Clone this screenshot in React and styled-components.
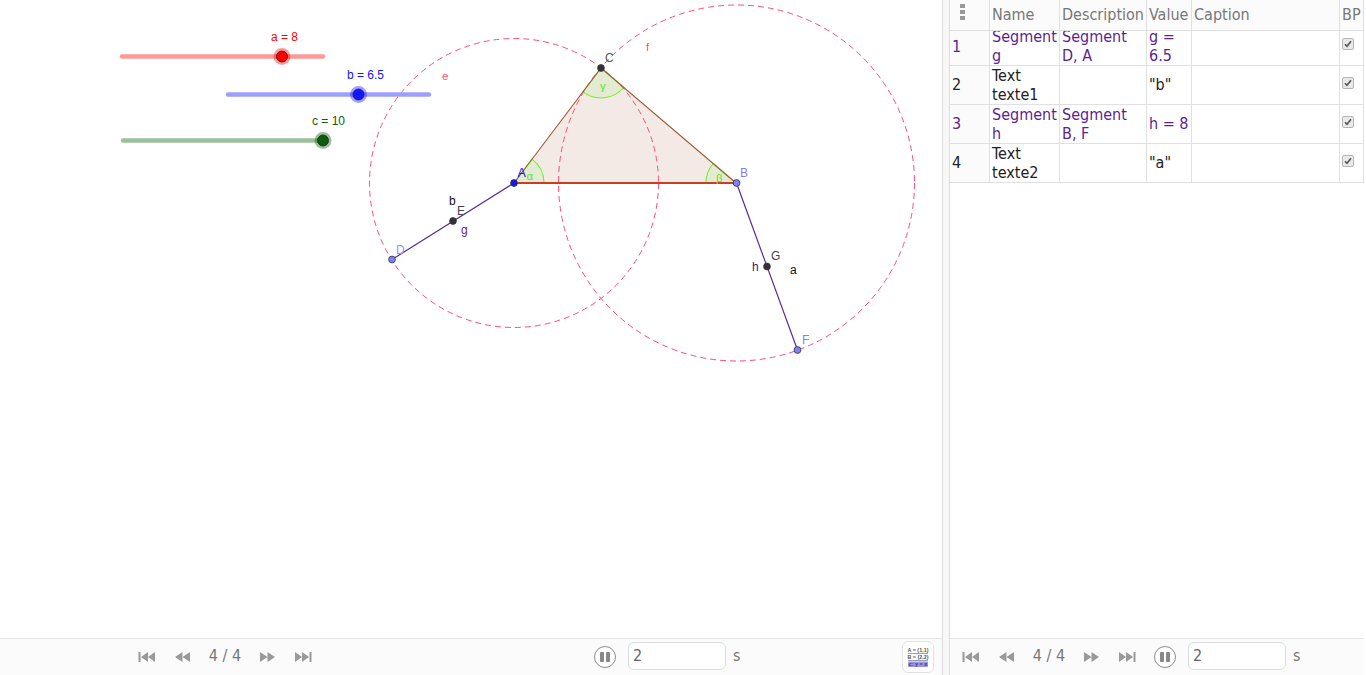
import React from "react";
import styled, { createGlobalStyle } from "styled-components";

const GlobalStyle = createGlobalStyle`
  html, body {
    margin: 0;
    padding: 0;
    background: #fff;
  }
  body {
    font-family: "DejaVu Sans Condensed", "DejaVu Sans", sans-serif;
  }
`;

const dots = `
  background-color: #fbfbfb;
  background-image: radial-gradient(#ececec 0.6px, transparent 0.7px);
  background-size: 8px 8px;
`;

const Page = styled.div`
  width: 1366px;
  height: 675px;
  display: flex;
  overflow: hidden;
`;

const GraphicsPanel = styled.div`
  width: 942px;
  display: flex;
  flex-direction: column;
`;

const Canvas = styled.svg`
  display: block;
  width: 942px;
  height: 638px;
  flex: none;
`;

const Divider = styled.div`
  width: 6px;
  border-left: 1px solid #dedede;
  border-right: 1px solid #dedede;
  background: #f7f7f7;
`;

const TablePanel = styled.div`
  width: 414px;
  display: flex;
  flex-direction: column;
`;

const Table = styled.div`
  height: 638px;
  flex: none;
  overflow: hidden;
`;

const Row = styled.div`
  display: grid;
  grid-template-columns: 40px 70px 87px 45px 148px 24px;
  grid-template-rows: minmax(0, 1fr);
  width: 414px;
  height: ${(p) => p.$height}px;
  border-bottom: 1px solid #e0e0e0;
  box-sizing: content-box;
  ${(p) => p.$head && dots}
`;

const Cell = styled.div`
  display: flex;
  align-items: center;
  min-width: 0;
  padding: 0 1px ${(p) => (p.$tight ? 4 : 1)}px 2px;
  border-right: 1px solid #e0e0e0;
  font-size: 16px;
  line-height: 19px;
  color: ${(p) => (p.$head ? "#777" : p.$purple ? "#5b1f96" : "#222")};
  ${(p) => p.$dotted && dots}
  box-sizing: border-box;
`;

const HeadRow = styled(Row)`
  position: relative;
  z-index: 1;
`;

const MenuDots = styled.div`
  display: flex;
  flex-direction: column;
  gap: 2px;
  margin: -5px 0 0 8px;
`;

const MenuDot = styled.span`
  width: 5px;
  height: 4px;
  background: #999;
`;

const CheckBox = styled.span`
  display: flex;
  align-items: center;
  justify-content: center;
  width: 12px;
  height: 12px;
  margin: -4px 0 0 0;
  border: 1px solid #b5b5b5;
  border-radius: 2px;
  background: #e9e9e9;
  box-sizing: border-box;
`;

const Toolbar = styled.div`
  flex: 1;
  display: flex;
  align-items: center;
  border-top: 1px solid #e6e6e6;
  padding-left: ${(p) => p.$left}px;
  ${dots}
`;

const Transport = styled.div`
  display: flex;
  align-items: center;
  width: ${(p) => p.$width}px;
  flex: none;
  justify-content: space-between;
`;

const Counter = styled.span`
  font-size: 16px;
  color: #777;
  margin-top: -3px;
`;

const PauseButton = styled.span`
  flex: none;
  width: 22px;
  height: 22px;
  margin-left: ${(p) => p.$gap}px;
  border: 1.5px solid #8c8c8c;
  border-radius: 50%;
  background: #fff;
  display: flex;
  align-items: center;
  justify-content: center;
  gap: 2px;
  box-sizing: border-box;
`;

const PauseBar = styled.span`
  width: 4px;
  height: 10px;
  background: #888;
  border-radius: 1px;
`;

const SpeedInput = styled.div`
  flex: none;
  width: 98px;
  height: 28px;
  margin-left: ${(p) => p.$gap}px;
  margin-top: -2px;
  padding-left: 4px;
  border: 1px solid #dcdcdc;
  border-radius: 6px;
  background: #fff;
  box-sizing: border-box;
  font-size: 16px;
  line-height: 25px;
  color: #666;
`;

const Unit = styled.span`
  margin-left: 7px;
  margin-top: -3px;
  font-size: 16px;
  color: #777;
`;

const AlgebraButton = styled.span`
  flex: none;
  width: 32px;
  height: 32px;
  margin-left: auto;
  margin-right: 8px;
  border: 1px solid #e2e2e2;
  border-radius: 6px;
  background: #fff;
  box-sizing: border-box;
  display: flex;
  align-items: center;
  justify-content: center;
`;

const StepIcon = ({ dir, end }) => (
  <svg width="18" height="12" viewBox="0 0 18 12" style={dir === "back" ? undefined : { transform: "scaleX(-1)" }}>
    {end ? (
      <>
        <rect x="0.5" y="1" width="2" height="10" fill="#999" />
        <path d="M3 6 L10 1 V11 Z M10 6 L17 1 V11 Z" fill="#999" />
      </>
    ) : (
      <path d="M2 6 L9.5 1 V11 Z M9.5 6 L17 1 V11 Z" fill="#999" />
    )}
  </svg>
);

const AlgebraIcon = () => (
  <svg width="22" height="22" viewBox="0 0 22 22" fontFamily="Liberation Sans, sans-serif" fontWeight="700" fontSize="5.4">
    <text x="11" y="6" textAnchor="middle" fill="#555">A = (1,1)</text>
    <rect x="1" y="7" width="20" height="0.8" fill="#888" />
    <text x="11" y="13" textAnchor="middle" fill="#555">B = (2,2)</text>
    <rect x="1" y="14" width="20" height="0.8" fill="#888" />
    <rect x="1" y="15.5" width="20" height="5.5" rx="1" fill="#9b92f0" />
    <text x="11" y="20" textAnchor="middle" fill="#444">c: y = x</text>
  </svg>
);

const Controls = ({ width }) => (
  <Transport $width={width}>
    <StepIcon dir="back" end />
    <StepIcon dir="back" />
    <Counter>4 / 4</Counter>
    <StepIcon dir="forward" />
    <StepIcon dir="forward" end />
  </Transport>
);

const sliders = [
  { x1: 122, x2: 323, y: 56.5, knob: 282, color: "#ff0000", track: "#ff9999", label: "a = 8", lx: 284.5, ly: 41 },
  { x1: 228, x2: 429, y: 94.5, knob: 358.5, color: "#1414ff", track: "#9e9eff", label: "b = 6.5", lx: 365.5, ly: 79 },
  { x1: 123, x2: 323, y: 140.5, knob: 323, color: "#0c5c0c", track: "#9bc19b", label: "c = 10", lx: 328.5, ly: 125 },
];

const points = [
  { x: 392, y: 259.5, fill: "#7f7fff" },
  { x: 453, y: 221, fill: "#333" },
  { x: 767, y: 266.5, fill: "#333" },
  { x: 797.5, y: 350, fill: "#7f7fff" },
  { x: 601, y: 68, fill: "#333" },
  { x: 736.5, y: 183, fill: "#7f7fff" },
  { x: 514, y: 183, fill: "#1414ff" },
];

const labels = [
  ["A", 517.5, 177, "#1414ff", 12.5],
  ["α", 526.5, 180, "#66e033", 11.5],
  ["B", 740, 177, "#7f7fff", 12],
  ["β", 716, 182, "#66e033", 11.5],
  ["C", 605, 62, "#555", 12],
  ["γ", 600, 90, "#66e033", 11.5],
  ["D", 396, 254, "#8f8fff", 12],
  ["E", 457, 215, "#444", 12],
  ["F", 802, 344, "#7f7fff", 12],
  ["G", 771, 260, "#444", 12],
  ["b", 449, 205, "#111", 12],
  ["g", 461, 234, "#5b1f96", 12],
  ["h", 752, 271, "#3f1570", 12],
  ["a", 790, 274, "#111", 12],
  ["e", 442, 80, "#ff4d7d", 11.5],
  ["f", 646, 51, "#ff4d7d", 11.5],
];

const Drawing = () => (
  <Canvas viewBox="0 0 942 638" fontFamily="Liberation Sans, sans-serif">
    <path d="M514 183 L601 68 L736 183 Z" fill="#f4eae5" />
    <g fill="#e3ecd2" stroke="#77ee33" strokeWidth="1.1">
      <path d="M514 183 L532.1 159.1 A30 30 0 0 1 544 183 Z" />
      <path d="M736 183 L706 183 A30 30 0 0 1 713.2 163.5 Z" />
      <path d="M601 68 L623.8 87.5 A30 30 0 0 1 582.9 91.9 Z" />
    </g>
    <g fill="none" stroke="#ff4d7d" strokeWidth="1" strokeDasharray="6 4">
      <circle cx="514" cy="183" r="144.5" />
      <circle cx="736.5" cy="183" r="178" />
    </g>
    <path d="M514 183 L601 68 L736 183" fill="none" stroke="#9c5a34" strokeWidth="1.1" />
    <path d="M514 183 H736" stroke="#c8401e" strokeWidth="2" />
    <path d="M392 259.5 L514 183 M736.5 183 L797.5 350" stroke="#5b2a9e" strokeWidth="1.2" />
    {sliders.map((s) => (
      <g key={s.label}>
        <line x1={s.x1} x2={s.x2} y1={s.y} y2={s.y} stroke={s.track} strokeWidth="4.5" strokeLinecap="round" />
        <circle cx={s.knob} cy={s.y} r="8.5" fill={s.color} fillOpacity="0.4" />
        <circle cx={s.knob} cy={s.y} r="5.5" fill={s.color} stroke="#222" strokeWidth="0.8" />
        <text x={s.lx} y={s.ly} textAnchor="middle" fontSize="12" fill={s.color}>{s.label}</text>
      </g>
    ))}
    {points.map((p) => (
      <circle key={p.x} cx={p.x} cy={p.y} r="3.4" fill={p.fill} stroke="#333" strokeWidth="0.8" />
    ))}
    {labels.map(([text, x, y, color, size]) => (
      <text key={text} x={x} y={y} fontSize={size} fill={color}>{text}</text>
    ))}
  </Canvas>
);

const rows = [
  { id: 1, height: 34, tight: true, purple: true, name: "Segment g", desc: "Segment D, A", value: "g = 6.5" },
  { id: 2, height: 38, name: "Text texte1", desc: "", value: '"b"' },
  { id: 3, height: 38, purple: true, name: "Segment h", desc: "Segment B, F", value: "h = 8" },
  { id: 4, height: 38, name: "Text texte2", desc: "", value: '"a"' },
];

const Check = () => (
  <svg width="8" height="8" viewBox="0 0 8 8">
    <path d="M1 4.2 L3 6.3 L7 1.3" fill="none" stroke="#555" strokeWidth="1.6" />
  </svg>
);

export default function App() {
  return (
    <Page>
      <GlobalStyle />
      <GraphicsPanel>
        <Drawing />
        <Toolbar $left={138}>
          <Controls width={174} />
          <PauseButton $gap={282}><PauseBar /><PauseBar /></PauseButton>
          <SpeedInput $gap={12}>2</SpeedInput>
          <Unit>s</Unit>
          <AlgebraButton><AlgebraIcon /></AlgebraButton>
        </Toolbar>
      </GraphicsPanel>
      <Divider />
      <TablePanel>
        <Table>
          <HeadRow $height={30} $head>
            <Cell $head><MenuDots><MenuDot /><MenuDot /><MenuDot /></MenuDots></Cell>
            <Cell $head>Name</Cell>
            <Cell $head>Description</Cell>
            <Cell $head>Value</Cell>
            <Cell $head>Caption</Cell>
            <Cell $head>BP</Cell>
          </HeadRow>
          {rows.map((r) => (
            <Row key={r.id} $height={r.height}>
              <Cell $tight={r.tight} $purple={r.purple} $dotted>{r.id}</Cell>
              <Cell $tight={r.tight} $purple={r.purple}>{r.name}</Cell>
              <Cell $tight={r.tight} $purple={r.purple}>{r.desc}</Cell>
              <Cell $tight={r.tight} $purple={r.purple}>{r.value}</Cell>
              <Cell />
              <Cell $tight={r.tight}><CheckBox><Check /></CheckBox></Cell>
            </Row>
          ))}
        </Table>
        <Toolbar $left={12}>
          <Controls width={174} />
          <PauseButton $gap={18}><PauseBar /><PauseBar /></PauseButton>
          <SpeedInput $gap={12}>2</SpeedInput>
          <Unit>s</Unit>
        </Toolbar>
      </TablePanel>
    </Page>
  );
}
